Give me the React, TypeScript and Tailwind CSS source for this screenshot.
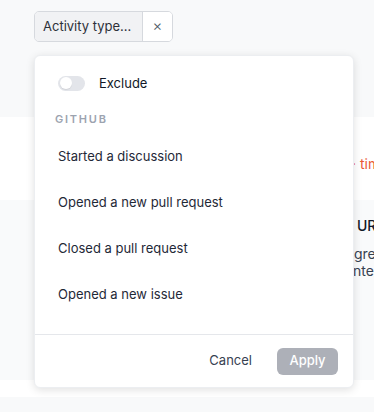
import React from "react";

const items = [
  "Started a discussion",
  "Opened a new pull request",
  "Closed a pull request",
  "Opened a new issue",
];

export default function App() {
  return (
    <div
      className="relative w-[374px] h-[412px] overflow-hidden bg-[#f8f9fa] text-[13px] text-[#1f2937]"
      style={{ fontFamily: "Inter, 'Noto Sans', sans-serif" }}
    >
      {/* Filter chip */}
      <div className="pt-[11px] pl-[34px]">
        <div className="inline-flex h-[31px] rounded-[5px] border border-[#d6d9de] overflow-hidden">
          <div className="flex items-center px-[8px] bg-[#f1f2f4] text-[#2d3139] border-r border-[#d6d9de] w-[108px]">
            Activity type...
          </div>
          <div className="flex items-center justify-center w-[29px] bg-white text-[#4b5563] text-[15px] font-light">
            ×
          </div>
        </div>
      </div>

      {/* Page content behind the popover */}
      <div className="mt-[75px] bg-white h-[83px] flex items-center whitespace-nowrap overflow-hidden">
        <span className="ml-[352px] mt-[9px] text-[#ea5a35] text-[14px]">· time ago</span>
      </div>
      <div className="bg-[#f9fafb] h-[180px] whitespace-nowrap overflow-hidden pt-[15px]">
        <div className="ml-[357px] text-[14px] font-medium text-[#111827]">URL</div>
        <div className="ml-[354px] mt-[9px] text-[14px] leading-[17px] text-[#374151]">great</div>
        <div className="ml-[353px] text-[14px] leading-[17px] text-[#374151]">nte/</div>
      </div>
      <div className="bg-white h-[17px]" />

      {/* Popover */}
      <div className="absolute left-[34px] top-[55px] w-[320px] h-[333px] bg-white rounded-[6px] border border-[#eceef1] shadow-[0_2px_8px_rgba(0,0,0,0.12)] flex flex-col">
        <div className="flex items-center gap-[14px] pl-[23px] pt-[6px] h-[48px]">
          <div className="w-[27px] h-[15px] rounded-full bg-[#e3e5ea] flex items-center px-[1.5px]">
            <div className="w-[12px] h-[12px] rounded-full bg-white shadow-[0_1px_1px_rgba(0,0,0,0.08)]" />
          </div>
          <span className="mt-[2px] text-[#111827]">Exclude</span>
        </div>
        <div className="pl-[20px] h-[29px] pt-[7px] text-[11px] font-semibold tracking-[0.16em] text-[#9ca3af]">
          GITHUB
        </div>
        <div className="flex flex-col pt-[1px]">
          {items.map((t) => (
            <div key={t} className="h-[46px] flex items-center pl-[23px] text-[#1f2937]">
              {t}
            </div>
          ))}
        </div>
        <div className="mt-auto border-t border-[#e5e7eb] h-[53px] flex items-center justify-end gap-[25px] pr-[15px]">
          <button className="text-[#374151] text-[13px]">Cancel</button>
          <button className="w-[61px] h-[27px] rounded-[6px] bg-[#adb0b8] text-white text-[13px] font-medium">
            Apply
          </button>
        </div>
      </div>
    </div>
  );
}
